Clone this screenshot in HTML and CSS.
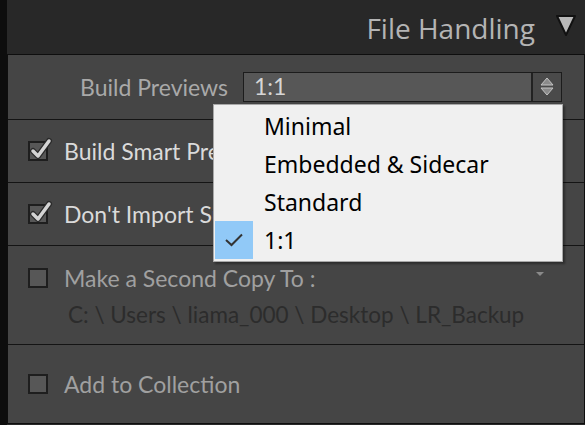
FILE: index.html
```html
<!DOCTYPE html>
<html lang="en">
<head>
    <meta charset="UTF-8">
    <meta name="viewport" content="width=device-width, initial-scale=1.0">
    <title>File Handling</title>
    <link rel="stylesheet" href="styles.css">
</head>
<body>
    <div class="page">
        <div class="header">
            <span class="title">File Handling</span>
            <svg class="collapse" width="22" height="24" viewBox="0 0 22 24">
                <polygon points="2,2 20,2 11,21" fill="#b8b8b8" stroke="#111" stroke-width="2" stroke-linejoin="round"/>
            </svg>
        </div>

        <div class="panel">
            <div class="row row-previews">
                <span class="label">Build Previews</span>
                <div class="select">
                    <span class="select-value">1:1</span>
                    <span class="stepper">
                        <svg width="14" height="20" viewBox="0 0 14 20">
                            <polygon points="7,1 13,8 1,8" fill="#8a8a8a" stroke="#c4c4c4" stroke-width="1"/>
                            <polygon points="1,11 13,11 7,18" fill="#8a8a8a" stroke="#c4c4c4" stroke-width="1"/>
                        </svg>
                    </span>
                </div>
            </div>

            <div class="row row-check">
                <span class="checkbox checked">
                    <svg width="26" height="26" viewBox="0 0 26 26">
                        <path d="M6 15 L11 20 L22 5" fill="none" stroke="#2a2a2a" stroke-width="6" stroke-linecap="round" stroke-linejoin="round"/>
                        <path d="M6 15 L11 20 L22 5" fill="none" stroke="#d4d4d4" stroke-width="3.5" stroke-linecap="round" stroke-linejoin="round"/>
                    </svg>
                </span>
                <span class="text on">Build Smart Previews</span>
            </div>

            <div class="row row-check">
                <span class="checkbox checked">
                    <svg width="26" height="26" viewBox="0 0 26 26">
                        <path d="M6 15 L11 20 L22 5" fill="none" stroke="#2a2a2a" stroke-width="6" stroke-linecap="round" stroke-linejoin="round"/>
                        <path d="M6 15 L11 20 L22 5" fill="none" stroke="#d4d4d4" stroke-width="3.5" stroke-linecap="round" stroke-linejoin="round"/>
                    </svg>
                </span>
                <span class="text on">Don't Import Suspected Duplicates</span>
            </div>

            <div class="row row-copy">
                <div class="copy-line">
                    <span class="checkbox"></span>
                    <span class="text off">Make a Second Copy To :</span>
                    <span class="mini-arrow"></span>
                </div>
                <div class="path">C: \ Users \ liama_000 \ Desktop \ LR_Backup</div>
            </div>

            <div class="row row-check row-last">
                <span class="checkbox"></span>
                <span class="text off">Add to Collection</span>
            </div>
        </div>
    </div>

    <div class="menu">
        <div class="menu-item"><span class="mark"></span><span>Minimal</span></div>
        <div class="menu-item"><span class="mark"></span><span>Embedded &amp; Sidecar</span></div>
        <div class="menu-item"><span class="mark"></span><span>Standard</span></div>
        <div class="menu-item selected">
            <span class="mark">
                <svg width="20" height="14" viewBox="0 0 20 14">
                    <path d="M2 7 L7.5 12 L18 1.5" fill="none" stroke="#333" stroke-width="2"/>
                </svg>
            </span>
            <span>1:1</span>
        </div>
    </div>
</body>
</html>
```

FILE: styles.css
```css
body {
    margin: 0;
    background-color: #0d0d0d;
    font-family: Lato, "Open Sans", sans-serif;
    overflow: hidden;
}

.page {
    margin-left: 7px;
    width: 578px;
    height: 425px;
    background-color: #282828;
}

.header {
    height: 54px;
    display: flex;
    justify-content: flex-end;
    align-items: center;
    padding-right: 8px;
}

.title {
    font-family: "Open Sans", sans-serif;
    font-size: 28px;
    color: #b4b4b4;
    margin-right: 20px;
    margin-top: 2px;
}

.collapse {
    margin-top: -2px;
}

.panel {
    border: 1px solid #0e0e0e;
    background-color: #454545;
    height: 368px;
    display: flex;
    flex-direction: column;
}

.row {
    display: flex;
    align-items: center;
    border-bottom: 1px solid #141414;
    box-sizing: border-box;
}

.row-previews {
    height: 65px;
}

.label {
    width: 220px;
    text-align: right;
    font-size: 23px;
    color: #a9a9a9;
    margin-right: 15px;
}

.select {
    display: flex;
    width: 319px;
    height: 30px;
    border: 1px solid #1c1c1c;
    box-sizing: border-box;
    background-color: #575757;
}

.select-value {
    flex: 1;
    padding-left: 10px;
    font-size: 23px;
    line-height: 27px;
    color: #d6d6d6;
}

.stepper {
    width: 28px;
    border-left: 2px solid #222;
    background-color: #4a4a4a;
    display: flex;
    align-items: center;
    justify-content: center;
}

.row-check {
    height: 63px;
    padding-left: 20px;
}

.checkbox {
    width: 20px;
    height: 20px;
    box-sizing: border-box;
    border: 2px solid #1e1e1e;
    background-color: #575757;
    margin-right: 16px;
    position: relative;
    flex-shrink: 0;
}

.checkbox svg {
    position: absolute;
    left: -3px;
    top: -7px;
}

.text {
    font-size: 23px;
    line-height: 28px;
    white-space: nowrap;
}

.on {
    color: #dadada;
}

.off {
    color: #a0a0a0;
}

.row-copy {
    height: 99px;
    flex-direction: column;
    align-items: stretch;
    padding-left: 20px;
    padding-top: 18px;
}

.copy-line {
    display: flex;
    align-items: center;
}

.mini-arrow {
    margin-left: auto;
    margin-right: 40px;
    margin-top: -8px;
    width: 0;
    height: 0;
    border-left: 4px solid transparent;
    border-right: 4px solid transparent;
    border-top: 4px solid #8a8a8a;
}

.path {
    padding-left: 40px;
    margin-top: 9px;
    font-size: 22.5px;
    line-height: 28px;
    color: #2c2c2c;
    white-space: nowrap;
}

.row-last {
    border-bottom: none;
    flex: 1;
}

.menu {
    position: absolute;
    left: 213px;
    top: 104px;
    width: 350px;
    box-sizing: border-box;
    padding: 2px 1px;
    background-color: #f0f0f0;
    border: 1px solid #a8a8a8;
    box-shadow: 2px 2px 2px rgba(0, 0, 0, 0.35);
    font-family: "Noto Sans", sans-serif;
    font-size: 23px;
    line-height: 28px;
    color: #000;
}

.menu-item {
    display: flex;
    align-items: center;
    height: 38px;
}

.mark {
    width: 38px;
    height: 38px;
    margin-right: 11px;
    display: flex;
    align-items: center;
    justify-content: center;
}

.selected .mark {
    background-color: #91c9f7;
}
```
